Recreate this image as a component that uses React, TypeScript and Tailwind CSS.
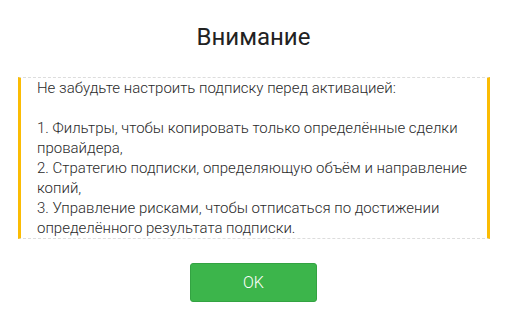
export default function App() {
  return (
    <div className="w-[513px] h-[323px] bg-white overflow-hidden" style={{ fontFamily: "Roboto, 'Noto Sans', sans-serif" }}>
      <div className="w-[507px]">
        <div className="pt-[21px] h-[32px] box-content text-center text-[24px] leading-[32px] text-[#222] font-normal">
          Внимание
        </div>
        <div className="mt-[24px] ml-[18px] w-[472px] border-l-[3px] border-r-[3px] border-l-[#fbbc04] border-r-[#fbbc04] border-y border-y-[#dddddd] border-dashed pl-[16px] pr-[16px] text-[15px] leading-[20px] font-light text-[#2a2a2a]" style={{ borderLeftStyle: "solid", borderRightStyle: "solid" }}>
          <div>Не забудьте настроить подписку перед активацией:</div>
          <div className="h-[20px]"></div>
          <div>1. Фильтры, чтобы копировать только определённые сделки провайдера,</div>
          <div>2. Стратегию подписки, определяющую объём и направление копий,</div>
          <div>3. Управление рисками, чтобы отписаться по достижении определённого результата подписки.</div>
        </div>
        <div className="mt-[24px] ml-[190px] w-[127px] h-[39px] rounded-[3px] bg-[#3cb54b] border border-[#33a342] flex items-center justify-center text-white text-[16px] font-light">
          OK
        </div>
      </div>
    </div>
  );
}
